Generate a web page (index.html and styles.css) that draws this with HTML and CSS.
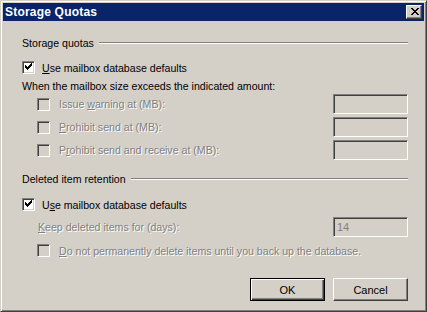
FILE: index.html
```html
<!DOCTYPE html>
<html lang="en">
  <head>
    <meta charset="UTF-8" />
    <title>Storage Quotas</title>
    <link rel="stylesheet" href="styles.css">
  </head>
  <body>
    <div class="window">
      <div class="title-bar">
        <span class="title">Storage Quotas</span>
        <button class="close-btn" aria-label="Close">
          <svg width="8" height="7" viewBox="0 0 8 7" shape-rendering="crispEdges">
            <path d="M0 0h2v1h-2zM6 0h2v1h-2zM1 1h2v1h-2zM5 1h2v1h-2zM2 2h4v1h-4zM3 3h2v1h-2zM2 4h4v1h-4zM1 5h2v1h-2zM5 5h2v1h-2zM0 6h2v1h-2zM6 6h2v1h-2z" fill="#000"/>
          </svg>
        </button>
      </div>

      <div class="content">
        <!-- Storage quotas -->
        <div class="group-head">
          <span>Storage quotas</span>
          <div class="etched"></div>
        </div>

        <label class="check-row first">
          <span class="checkbox checked">
            <svg width="9" height="9" viewBox="0 0 9 9" shape-rendering="crispEdges">
              <path d="M1 2h1v3h-1zM2 3h1v3h-1zM3 4h1v3h-1zM4 3h1v3h-1zM5 2h1v3h-1zM6 1h1v3h-1zM7 0h1v3h-1z" fill="#000"/>
            </svg>
          </span>
          <span><u>U</u>se mailbox database defaults</span>
        </label>

        <div class="text-row">When the mailbox size exceeds the indicated amount:</div>

        <div class="field-rows">
          <div class="field-row">
            <span class="checkbox disabled"></span>
            <span class="dim">Issue <u>w</u>arning at (MB):</span>
            <span class="field"></span>
          </div>
          <div class="field-row">
            <span class="checkbox disabled"></span>
            <span class="dim"><u>P</u>rohibit send at (MB):</span>
            <span class="field"></span>
          </div>
          <div class="field-row">
            <span class="checkbox disabled"></span>
            <span class="dim">P<u>r</u>ohibit send and receive at (MB):</span>
            <span class="field"></span>
          </div>
        </div>

        <!-- Deleted item retention -->
        <div class="group-head second">
          <span>Deleted item retention</span>
          <div class="etched"></div>
        </div>

        <label class="check-row retention">
          <span class="checkbox checked">
            <svg width="9" height="9" viewBox="0 0 9 9" shape-rendering="crispEdges">
              <path d="M1 2h1v3h-1zM2 3h1v3h-1zM3 4h1v3h-1zM4 3h1v3h-1zM5 2h1v3h-1zM6 1h1v3h-1zM7 0h1v3h-1z" fill="#000"/>
            </svg>
          </span>
          <span>U<u>s</u>e mailbox database defaults</span>
        </label>

        <div class="field-row keep">
          <span class="dim"><u>K</u>eep deleted items for (days):</span>
          <span class="field">14</span>
        </div>

        <div class="field-row backup">
          <span class="checkbox disabled"></span>
          <span class="dim"><u>D</u>o not permanently delete items until you back up the database.</span>
        </div>

        <div class="buttons">
          <button class="btn default">OK</button>
          <button class="btn">Cancel</button>
        </div>
      </div>
    </div>
  </body>
</html>
```

FILE: styles.css
```css
* {
  margin: 0;
  padding: 0;
  box-sizing: border-box;
}

body {
  background: #d4d0c8;
  font-family: 'Liberation Sans', Arial, sans-serif;
  font-size: 10.6px;
  color: #000;
  overflow: hidden;
}

.window {
  width: 427px;
  height: 312px;
  background: #d4d0c8;
  border: 1px solid;
  border-color: #d4d0c8 #404040 #404040 #d4d0c8;
  box-shadow: inset 1px 1px 0 #fff, inset -1px -1px 0 #808080;
  padding: 2px;
  display: flex;
  flex-direction: column;
}

.title-bar {
  height: 18px;
  background: #0a246a;
  display: flex;
  align-items: center;
  justify-content: space-between;
  padding: 0 2px 0 2px;
}

.title {
  color: #fff;
  font-weight: bold;
  font-size: 12px;
  letter-spacing: 0.2px;
}

.close-btn {
  width: 16px;
  height: 14px;
  background: #d4d0c8;
  border: 1px solid;
  border-color: #fff #404040 #404040 #fff;
  box-shadow: inset -1px -1px 0 #808080;
  display: flex;
  align-items: center;
  justify-content: center;
  padding: 0 0 1px 1px;
}

.content {
  flex: 1;
  display: flex;
  flex-direction: column;
  padding: 15px 16px 0 19px;
}

.group-head {
  height: 13px;
  display: flex;
  align-items: center;
  gap: 5px;
}

.group-head.second {
  margin-top: 12px;
}

.etched {
  flex: 1;
  height: 2px;
  border-top: 1px solid #808080;
  border-bottom: 1px solid #fff;
}

.check-row {
  height: 13px;
  display: flex;
  align-items: center;
  gap: 7px;
}

.check-row.first {
  margin-top: 12px;
}

.check-row.retention {
  margin-top: 13px;
}

.checkbox {
  width: 13px;
  height: 13px;
  flex: none;
  display: flex;
  align-items: center;
  justify-content: center;
  background: #fff;
  border: 1px solid;
  border-color: #808080 #fff #fff #808080;
  box-shadow: inset 1px 1px 0 #404040, inset -1px -1px 0 #d4d0c8;
}

.checkbox.disabled {
  background: #d4d0c8;
  margin-left: 15px;
}

.text-row {
  height: 13px;
  line-height: 13px;
  margin-top: 6px;
}

.field-rows {
  margin-top: 1px;
  display: flex;
  flex-direction: column;
  gap: 3px;
}

.field-row {
  height: 20px;
  display: flex;
  align-items: center;
  gap: 9px;
}

.field-row.keep {
  margin-top: 6px;
  padding-left: 16px;
}

.field-row.backup {
  margin-top: 7px;
  height: 13px;
}

.dim {
  color: #808080;
  text-shadow: 1px 1px 0 #fff;
}

.field {
  margin-left: auto;
  width: 75px;
  height: 20px;
  background: #d4d0c8;
  border: 1px solid;
  border-color: #808080 #fff #fff #808080;
  box-shadow: inset 1px 1px 0 #404040, inset -1px -1px 0 #d4d0c8;
  color: #808080;
  padding: 2px 0 0 3px;
  line-height: 14px;
  font-size: 11px;
}

.buttons {
  margin-top: auto;
  margin-bottom: 8px;
  display: flex;
  justify-content: flex-end;
  gap: 8px;
}

.btn {
  width: 75px;
  height: 23px;
  font-family: inherit;
  font-size: 11px;
  color: #000;
  background: #d4d0c8;
  border: 1px solid;
  border-color: #fff #404040 #404040 #fff;
  box-shadow: inset -1px -1px 0 #808080, inset 1px 1px 0 #d4d0c8;
}

.btn.default {
  border: 1px solid #000;
  box-shadow: inset 1px 1px 0 #fff, inset -1px -1px 0 #404040, inset -2px -2px 0 #808080;
}
```
